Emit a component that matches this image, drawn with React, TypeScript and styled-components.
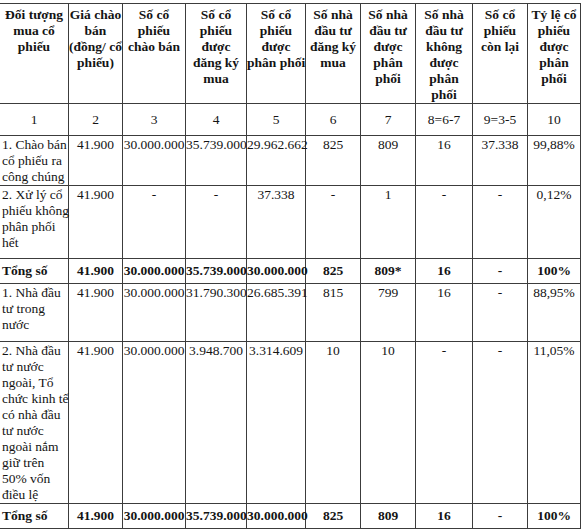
import React from "react";
import styled, { createGlobalStyle } from "styled-components";

const Global = createGlobalStyle`
  html, body {
    margin: 0;
    padding: 0;
    background: #ffffff;
  }
  body {
    font-family: "Liberation Serif", "Times New Roman", serif;
    color: #141414;
  }
`;

const Page = styled.div`
  padding-top: 3px;
  width: 583px;
  overflow: hidden;
`;

const Table = styled.table`
  table-layout: fixed;
  border-collapse: collapse;
  width: 581px;
  margin-left: -1px;
  font-family: "Liberation Serif", "Times New Roman", serif;
  font-size: 13.5px;
  line-height: 16px;
  color: #141414;
`;

const Row = styled.tr<{ $h: number }>`
  height: ${(p) => p.$h}px;
`;

const HeadCell = styled.th`
  border: 1px solid #3c3c3c;
  padding: 3px 0 0 0;
  vertical-align: top;
  text-align: center;
  font-family: "Liberation Serif", "Times New Roman", serif;
  font-weight: bold;
  white-space: nowrap;
`;

const IndexCell = styled.td`
  border: 1px solid #3c3c3c;
  padding: 0;
  vertical-align: middle;
  text-align: center;
  font-family: "Liberation Serif", "Times New Roman", serif;
  white-space: nowrap;
`;

const Cell = styled.td<{ $left?: boolean; $bold?: boolean; $middle?: boolean }>`
  border: 1px solid #3c3c3c;
  padding: ${(p) => (p.$middle ? "0" : "1px 0 0 0")};
  padding-left: ${(p) => (p.$left ? "2px" : "0")};
  vertical-align: ${(p) => (p.$middle ? "middle" : "top")};
  text-align: ${(p) => (p.$left ? "left" : "center")};
  font-family: "Liberation Serif", "Times New Roman", serif;
  font-weight: ${(p) => (p.$bold ? "bold" : "normal")};
  white-space: nowrap;
`;

const Lines = ({ lines }: { lines: string[] }) => (
  <>
    {lines.map((l, i) => (
      <React.Fragment key={i}>
        {i > 0 && <br />}
        {l}
      </React.Fragment>
    ))}
  </>
);

const widths = [69, 54, 63, 61, 59, 55, 55, 57, 55, 53];

const headers: string[][] = [
  ["Đối tượng", "mua cổ", "phiếu"],
  ["Giá chào", "bán", "(đồng/ cổ", "phiếu)"],
  ["Số cổ", "phiếu", "chào bán"],
  ["Số cổ", "phiếu", "được", "đăng ký", "mua"],
  ["Số cổ", "phiếu", "được", "phân phối"],
  ["Số nhà", "đầu tư", "đăng ký", "mua"],
  ["Số nhà", "đầu tư", "được", "phân", "phối"],
  ["Số nhà", "đầu tư", "không", "được", "phân", "phối"],
  ["Số cổ", "phiếu", "còn lại"],
  ["Tỷ lệ cổ", "phiếu", "được", "phân", "phối"],
];

const indexes = ["1", "2", "3", "4", "5", "6", "7", "8=6-7", "9=3-5", "10"];

type DataRow = {
  label: string[];
  values: string[];
  total?: boolean;
  h: number;
};

const rows: DataRow[] = [
  {
    label: ["1. Chào bán", "cổ phiếu ra", "công chúng"],
    values: ["41.900", "30.000.000", "35.739.000", "29.962.662", "825", "809", "16", "37.338", "99,88%"],
    h: 50,
  },
  {
    label: ["2. Xử lý cổ", "phiếu không", "phân phối", "hết"],
    values: ["41.900", "-", "-", "37.338", "-", "1", "-", "-", "0,12%"],
    h: 73,
  },
  {
    label: ["Tổng số"],
    values: ["41.900", "30.000.000", "35.739.000", "30.000.000", "825", "809*", "16", "-", "100%"],
    total: true,
    h: 25,
  },
  {
    label: ["1. Nhà đầu", "tư trong", "nước"],
    values: ["41.900", "30.000.000", "31.790.300", "26.685.391", "815", "799", "16", "-", "88,95%"],
    h: 58,
  },
  {
    label: [
      "2. Nhà đầu",
      "tư nước",
      "ngoài, Tổ",
      "chức kinh tế",
      "có nhà đầu",
      "tư nước",
      "ngoài nắm",
      "giữ trên",
      "50% vốn",
      "điều lệ",
    ],
    values: ["41.900", "30.000.000", "3.948.700", "3.314.609", "10", "10", "-", "-", "11,05%"],
    h: 162,
  },
  {
    label: ["Tổng số"],
    values: ["41.900", "30.000.000", "35.739.000", "30.000.000", "825", "809", "16", "-", "100%"],
    total: true,
    h: 25,
  },
];

export default function App() {
  return (
    <>
      <Global />
      <Page>
        <Table>
          <colgroup>
            {widths.map((w, i) => (
              <col key={i} style={{ width: w }} />
            ))}
          </colgroup>
          <thead>
            <Row $h={100}>
              {headers.map((h, i) => (
                <HeadCell key={i}>
                  <Lines lines={h} />
                </HeadCell>
              ))}
            </Row>
          </thead>
          <tbody>
            <Row $h={32}>
              {indexes.map((n) => (
                <IndexCell key={n}>{n}</IndexCell>
              ))}
            </Row>
            {rows.map((r, ri) => (
              <Row key={ri} $h={r.h}>
                <Cell $left $bold={r.total} $middle={r.total}>
                  <Lines lines={r.label} />
                </Cell>
                {r.values.map((v, vi) => (
                  <Cell key={vi} $bold={r.total} $middle={r.total}>
                    {v}
                  </Cell>
                ))}
              </Row>
            ))}
          </tbody>
        </Table>
      </Page>
    </>
  );
}
